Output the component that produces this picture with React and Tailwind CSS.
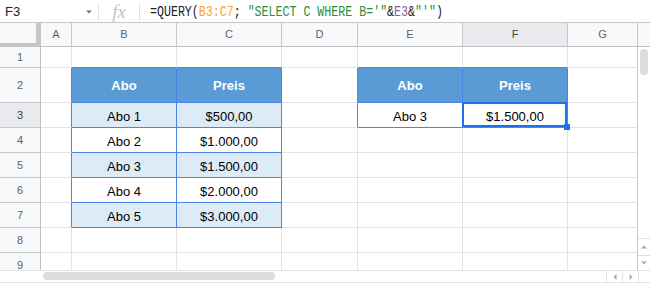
import React from "react";

const COLS = ["A", "B", "C", "D", "E", "F", "G"];

const DATA = {
  "2-2": "Abo",
  "2-3": "Preis",
  "3-2": "Abo 1",
  "3-3": "$500,00",
  "4-2": "Abo 2",
  "4-3": "$1.000,00",
  "5-2": "Abo 3",
  "5-3": "$1.500,00",
  "6-2": "Abo 4",
  "6-3": "$2.000,00",
  "7-2": "Abo 5",
  "7-3": "$3.000,00",
  "2-5": "Abo",
  "2-6": "Preis",
  "3-5": "Abo 3",
  "3-6": "$1.500,00",
};

const inT1 = (r, c) => r >= 2 && r <= 7 && (c === 2 || c === 3);
const inT2 = (r, c) => r >= 2 && r <= 3 && (c === 5 || c === 6);
const inT = (r, c) => inT1(r, c) || inT2(r, c);

function FormulaBar() {
  return (
    <div className="flex h-[23px] items-center border-b border-[#c7c7c7] bg-white">
      <div className="flex w-[98px] items-center justify-between pl-[5px] pr-[6px]">
        <span className="text-[13px] leading-none text-[#202124]">F3</span>
        <svg width="6" height="4" viewBox="0 0 6 4" className="mt-[1px]">
          <path d="M0 0.5 L6 0.5 L3 3.5 Z" fill="#70757a" />
        </svg>
      </div>
      <div className="h-[17px] w-px bg-[#e0e0e0]" />
      <div className="flex w-[40px] items-center justify-center">
        <span className="font-['Liberation_Serif',serif] text-[19px] italic leading-none text-[#c4c4c4]">
          fx
        </span>
      </div>
      <div className="h-[17px] w-px bg-[#e0e0e0]" />
      <div className="pl-[10px]">
        <span className="inline-block origin-left scale-x-[0.83] whitespace-pre font-['Liberation_Mono',monospace] text-[14px] leading-none text-[#202124]">
          <span>=QUERY(</span>
          <span className="text-[#f3a437]">B3:C7</span>
          <span>; </span>
          <span className="text-[#2c8d3f]">"SELECT C WHERE B='"</span>
          <span>&amp;</span>
          <span className="text-[#8e5aa8]">E3</span>
          <span>&amp;</span>
          <span className="text-[#2c8d3f]">"'"</span>
          <span>)</span>
        </span>
      </div>
    </div>
  );
}

function Cell({ r, c }) {
  const rightBlue = inT(r, c) || inT(r, c + 1);
  const bottomBlue = inT(r, c) || inT(r + 1, c);
  const header = r === 2 && inT(r, c);
  const shaded = inT1(r, c) && (r === 3 || r === 5 || r === 7);
  const text = DATA[`${r}-${c}`];
  const selected = r === 3 && c === 6;

  const cls = [
    "relative flex justify-center border-r border-b text-[13px] leading-none",
    header ? "items-center" : "items-center pt-[3px]",
    rightBlue
      ? "border-r-[#4a86e8]"
      : c === 7
      ? "border-r-[#c7c7c7]"
      : "border-r-[#e2e2e2]",
    r === 9 ? "border-b-0" : bottomBlue ? "border-b-[#4a86e8]" : "border-b-[#e2e2e2]",
    header
      ? "bg-[#5b9bd5] font-bold text-white"
      : shaded
      ? "bg-[#ddebf7] text-black"
      : "bg-white text-black",
  ].join(" ");

  return (
    <div className={cls}>
      {text && <span>{text}</span>}
      {selected && (
        <>
          <div className="pointer-events-none absolute -left-[1px] -top-[1px] bottom-0 right-0 z-10 border-2 border-[#1a73e8]" />
          <div className="absolute -bottom-[3px] -right-[3px] z-20 h-[6px] w-[6px] bg-[#1a73e8]" />
        </>
      )}
    </div>
  );
}

function RowHeader({ r }) {
  const sel = r === 3;
  return (
    <div
      className={[
        "flex justify-center border-r border-r-[#c0c0c0] text-[11px] leading-none",
        r === 9 ? "items-start pt-[7px] border-b-0" : "items-center border-b border-b-[#c7c7c7]",
        sel ? "bg-[#e8eaed] text-[#3c4043]" : "bg-[#f8f9fa] text-[#5f6368]",
      ].join(" ")}
    >
      {r}
    </div>
  );
}

export default function App() {
  const rows = [1, 2, 3, 4, 5, 6, 7, 8, 9];
  return (
    <div className="h-[283px] w-[650px] overflow-hidden bg-white font-['Liberation_Sans',Arial,sans-serif]">
      <FormulaBar />
      <div className="grid grid-cols-[41px_31px_105px_105px_76px_105px_105px_70px_12px] grid-rows-[24px_21px_35px_25px_25px_25px_25px_25px_25px_17px_13px]">
        {/* header row */}
        <div className="border-b-[4px] border-r-[5px] border-[#c4c7c5] bg-[#f8f9fa]" />
        {COLS.map((l, i) => (
          <div
            key={l}
            className={[
              "flex items-center justify-center border-b border-r border-b-[#c0c0c0] border-r-[#c7c7c7] text-[11px] leading-none",
              i === 5 ? "bg-[#e8eaed] text-[#3c4043]" : "bg-[#f8f9fa] text-[#5f6368]",
            ].join(" ")}
          >
            {l}
          </div>
        ))}
        <div className="border-b border-b-[#c0c0c0] bg-[#f8f9fa]" />

        {/* vertical scrollbar */}
        <div className="col-start-9 row-span-9 row-start-2 flex flex-col bg-white">
          <div className="ml-[2px] mt-[2px] h-[26px] w-[8px] rounded-full bg-[#dadce0]" />
          <div className="flex-1" />
          <div className="flex h-[17px] items-center justify-center border-t border-[#e2e2e2]">
            <svg width="6" height="4" viewBox="0 0 6 4">
              <path d="M0 3.5 L6 3.5 L3 0.5 Z" fill="#a8a8a8" />
            </svg>
          </div>
          <div className="flex h-[15px] items-center justify-center border-t border-[#e2e2e2]">
            <svg width="6" height="4" viewBox="0 0 6 4">
              <path d="M0 0.5 L6 0.5 L3 3.5 Z" fill="#a8a8a8" />
            </svg>
          </div>
        </div>

        {rows.map((r) => (
          <React.Fragment key={r}>
            <RowHeader r={r} />
            {COLS.map((_, i) => (
              <Cell key={i} r={r} c={i + 1} />
            ))}
          </React.Fragment>
        ))}

        {/* horizontal scrollbar */}
        <div className="col-span-9 flex border-b border-t border-[#e2e2e2] bg-white">
          <div className="ml-[43px] mt-[1px] h-[8px] w-[232px] rounded-full bg-[#dadce0]" />
          <div className="flex-1" />
          <div className="flex w-[16px] items-center justify-center border-l border-[#e2e2e2]">
            <svg width="4" height="6" viewBox="0 0 4 6">
              <path d="M3.5 0 L3.5 6 L0.5 3 Z" fill="#a8a8a8" />
            </svg>
          </div>
          <div className="flex w-[16px] items-center justify-center border-l border-[#e2e2e2]">
            <svg width="4" height="6" viewBox="0 0 4 6">
              <path d="M0.5 0 L0.5 6 L3.5 3 Z" fill="#a8a8a8" />
            </svg>
          </div>
          <div className="w-[12px] border-l border-[#e2e2e2]" />
        </div>
      </div>
    </div>
  );
}
